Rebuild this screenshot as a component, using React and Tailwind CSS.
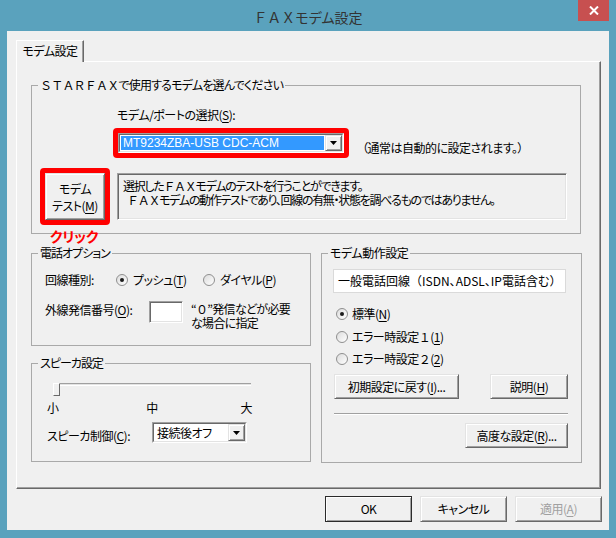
import React from 'react';

// full-width latin keeps its full advance
const W = ({ children }) => <span className="[font-feature-settings:normal]">{children}</span>;
const U = ({ children }) => <span className="underline underline-offset-[2px]">{children}</span>;

const Btn = ({ children, className = '', def = false, disabled = false }) => (
  <div
    className={`flex items-center justify-center bg-[#f0f0f0] leading-[16px] ${
      def
        ? 'border border-[#2b2b2b] shadow-[inset_1px_1px_0_#fff,inset_-1px_-1px_0_#a0a0a0]'
        : 'border border-t-[#e3e3e3] border-l-[#e3e3e3] border-r-[#696969] border-b-[#696969] shadow-[inset_1px_1px_0_#fff,inset_-1px_-1px_0_#a0a0a0]'
    } ${disabled ? 'text-[#a0a0a0]' : 'text-black'} ${className}`}
  >
    {children}
  </div>
);

const Radio = ({ checked }) => (
  <span className="flex h-[12px] w-[12px] shrink-0 items-center justify-center rounded-full border border-[#8f8f8f] bg-gradient-to-br from-[#dcdcdc] to-white">
    {checked && <span className="h-[4px] w-[4px] rounded-full bg-[#1a1a1a]" />}
  </span>
);

const DropBtn = () => (
  <div className="flex w-[17px] items-center justify-center border border-t-[#e3e3e3] border-l-[#e3e3e3] border-r-[#696969] border-b-[#696969] bg-[#f0f0f0] shadow-[inset_1px_1px_0_#fff,inset_-1px_-1px_0_#a0a0a0]">
    <svg width="7" height="4" viewBox="0 0 7 4">
      <path d="M0 0h7L3.5 4z" fill="#000" />
    </svg>
  </div>
);

const Combo = ({ text, selected, className = '', textClass = '' }) => (
  <div className={`flex border border-t-[#a0a0a0] border-l-[#a0a0a0] border-r-white border-b-white ${className}`}>
    <div className="flex flex-1 border border-t-[#696969] border-l-[#696969] border-r-[#e3e3e3] border-b-[#e3e3e3] bg-white">
      <div className="flex flex-1 p-[1px]">
        <div className={`flex flex-1 items-center pl-[2px] leading-[14px] ${selected ? 'bg-[#3399ff] text-white' : ''} ${textClass}`}>
          {text}
        </div>
      </div>
      <DropBtn />
    </div>
  </div>
);

const Sunken = ({ className = '', children }) => (
  <div
    className={`border border-t-[#a0a0a0] border-l-[#a0a0a0] border-r-white border-b-white shadow-[inset_1px_1px_0_#696969,inset_-1px_-1px_0_#e3e3e3] ${className}`}
  >
    {children}
  </div>
);

const Group = ({ title, className = '', legendClass = '', children }) => (
  <fieldset className={`m-0 min-w-0 border border-[#a9a9a9] p-0 ${className}`}>
    <legend className={`ml-[6px] px-[2px] leading-[16px] ${legendClass}`}>{title}</legend>
    {children}
  </fieldset>
);

export default function App() {
  return (
    <div className="flex h-[538px] w-[616px] flex-col bg-[#5aa2bd] font-['Noto_Sans_CJK_JP',sans-serif] text-[12px] tracking-[-0.5px] text-black [font-feature-settings:'palt']">
      {/* title bar */}
      <div className="relative flex h-[31px] shrink-0 items-center justify-center pt-[3px] text-[14px] tracking-normal text-[#333]">
        <span>
          <W>ＦＡＸ</W>モデム設定
        </span>
        <div className="absolute right-[7px] top-0 flex h-[21px] w-[31px] items-center justify-center bg-[#c75050]">
          <svg width="10" height="9" viewBox="0 0 10 9">
            <path d="M1 0.5l8 8M9 0.5l-8 8" stroke="#fff" strokeWidth="2" />
          </svg>
        </div>
      </div>

      <div className="mx-[7px] mb-[8px] flex flex-1 flex-col bg-[#f0f0f0]">
        {/* tab */}
        <div className="pl-[9px] pt-[9px]">
          <div className="relative z-10 -mb-[1px] flex h-[22px] w-[68px] items-center justify-center border-l border-r border-t border-l-white border-r-[#696969] border-t-white bg-[#f0f0f0] pb-[1px] shadow-[inset_-1px_0_0_#a0a0a0]">
            モデム設定
          </div>
        </div>

        {/* tab page */}
        <div className="ml-[9px] flex h-[428px] w-[585px] flex-col border border-b-[#696969] border-l-white border-r-[#696969] border-t-white shadow-[inset_-1px_-1px_0_#a0a0a0]">
          <Group
            className="ml-[14px] mt-[15px] h-[157px] w-[550px]"
            legendClass="tracking-[-0.8px]"
            title={
              <>
                <W>ＳＴＡＲＦＡＸ</W>で使用するモデムを選んでください
              </>
            }
          >
            <div className="ml-[85px] mt-[14px] leading-[16px]">
              モデム/ポートの選択(<U>S</U>):
            </div>
            <div className="ml-[81px] mt-[5px] flex items-start">
              <div className="flex rounded-[4px] border-[5px] border-[#ff0000]">
                <Combo
                  className="h-[20px] w-[226px]"
                  textClass="font-['Liberation_Sans',sans-serif] tracking-normal"
                  text="MT9234ZBA-USB CDC-ACM"
                  selected
                />
              </div>
              <div className="ml-[13px] mt-[12px] leading-[16px]">（通常は自動的に設定されます。）</div>
            </div>
            <div className="ml-[8px] mt-[10px] flex items-start">
              <div className="flex rounded-[4px] border-[5px] border-[#ff0000]">
                <Btn className="h-[47px] w-[60px] flex-col leading-[17px]">
                  <span>モデム</span>
                  <span>
                    テスト(<U>M</U>)
                  </span>
                </Btn>
              </div>
              <Sunken className="ml-[7px] mt-[5px] h-[47px] w-[450px] pl-[5px] pt-[5px] leading-[14px] tracking-[-1.3px]">
                <div>
                  選択した<W>ＦＡＸ</W>モデムのテストを行うことができます。
                </div>
                <div className="ml-[4px]">
                  <W>ＦＡＸ</W>モデムの動作テストであり、回線の有無・状態を調べるものではありません。
                </div>
              </Sunken>
            </div>
          </Group>

          <div className="relative z-10 ml-[33px] -mt-[5px] h-[14px] text-[14px] font-bold leading-[14px] tracking-[-0.2px] text-[#f00]">
            クリック
          </div>

          <div className="ml-[14px] mt-[2px] flex items-start gap-[10px]">
            {/* left column */}
            <div className="flex w-[280px] flex-col">
              <Group title="電話オプション" legendClass="tracking-[-1px]" className="h-[101px] w-[280px]">
                <div className="ml-[13px] mt-[11px] flex h-[16px] items-center leading-[16px]">
                  <span className="w-[71px]">回線種別:</span>
                  <span className="flex w-[87px] items-center">
                    <Radio checked />
                    <span className="ml-[5px]">
                      プッシュ(<U>T</U>)
                    </span>
                  </span>
                  <span className="flex items-center">
                    <Radio />
                    <span className="ml-[5px]">
                      ダイヤル(<U>P</U>)
                    </span>
                  </span>
                </div>
                <div className="ml-[13px] mt-[13px] flex items-start">
                  <span className="mt-[1px] w-[104px] leading-[16px]">
                    外線発信番号(<U>O</U>):
                  </span>
                  <Sunken className="h-[22px] w-[34px] bg-white" />
                  <div className="ml-[8px] mt-[1px] leading-[14px] tracking-[-0.7px]">
                    <div>
                      <W>“０”</W>発信などが必要
                    </div>
                    <div>な場合に指定</div>
                  </div>
                </div>
              </Group>

              <Group title="スピーカ設定" legendClass="tracking-[-1px]" className="mt-[9px] h-[107px] w-[280px]">
                <div className="relative ml-[21px] mt-[12px] h-[13px] w-[198px]">
                  <div className="mt-[5px] h-[3px] w-full border-b border-t border-b-white border-t-[#a0a0a0] bg-[#e3e3e3]" />
                  <div className="absolute left-0 top-0 h-[13px] w-[7px] border border-b-[#696969] border-l-white border-r-[#696969] border-t-white bg-[#f0f0f0]" />
                </div>
                <div className="ml-[15px] mt-[4px] flex w-[205px] justify-between leading-[16px]">
                  <span>小</span>
                  <span className="ml-[5px]">中</span>
                  <span>大</span>
                </div>
                <div className="ml-[15px] mt-[6px] flex items-start">
                  <span className="mt-[6px] w-[105px] leading-[16px]">
                    スピーカ制御(<U>C</U>):
                  </span>
                  <Combo className="h-[21px] w-[95px]" text="接続後オフ" />
                </div>
              </Group>
            </div>

            {/* right column */}
            <Group title="モデム動作設定" className="h-[218px] w-[261px]">
              <div className="ml-[11px] mt-[8px] h-[24px] w-[233px] border border-[#dadada] bg-white pl-[4px] pt-[3px] leading-[16px] tracking-normal">
                一般電話回線<W>（</W>ISDN、ADSL、IP電話含む<W>）</W>
              </div>
              <div className="ml-[14px] mt-[13px] flex h-[16px] items-center leading-[16px]">
                <Radio checked />
                <span className="ml-[4px]">
                  標準(<U>N</U>)
                </span>
              </div>
              <div className="ml-[14px] mt-[7px] flex h-[16px] items-center leading-[16px]">
                <Radio />
                <span className="ml-[4px]">
                  エラー時設定<W>１</W>(<U>1</U>)
                </span>
              </div>
              <div className="ml-[14px] mt-[6px] flex h-[16px] items-center leading-[16px]">
                <Radio />
                <span className="ml-[4px]">
                  エラー時設定<W>２</W>(<U>2</U>)
                </span>
              </div>
              <div className="ml-[12px] mt-[7px] flex">
                <Btn className="h-[25px] w-[125px]">
                  初期設定に戻す(<U>I</U>)...
                </Btn>
                <Btn className="ml-[31px] h-[25px] w-[78px]">
                  説明(<U>H</U>)
                </Btn>
              </div>
              <div className="ml-[12px] mt-[14px] h-[2px] w-[234px] border-b border-t border-b-white border-t-[#a0a0a0]" />
              <Btn className="ml-[143px] mt-[8px] h-[25px] w-[103px]">
                高度な設定(<U>R</U>)...
              </Btn>
            </Group>
          </div>
        </div>

        {/* dialog buttons */}
        <div className="mt-[7px] flex justify-end gap-[8px] pr-[7px]">
          <Btn def className="h-[26px] w-[87px]">
            OK
          </Btn>
          <Btn className="h-[26px] w-[87px]">キャンセル</Btn>
          <Btn disabled className="h-[26px] w-[87px]">
            適用(<U>A</U>)
          </Btn>
        </div>
      </div>
    </div>
  );
}
